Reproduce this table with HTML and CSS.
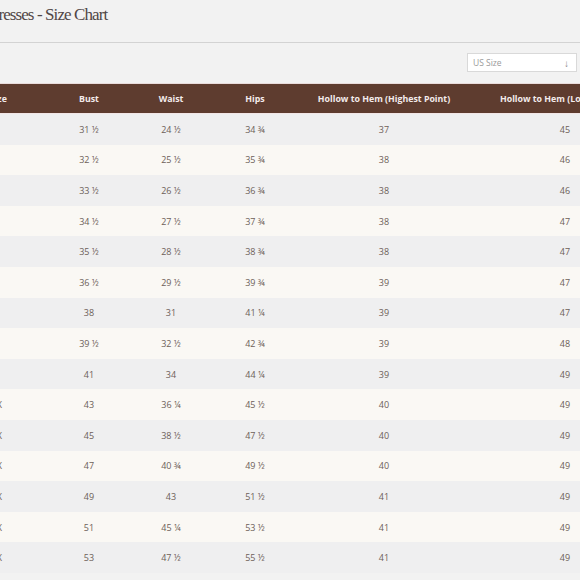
FILE: index.html
```html
<!DOCTYPE html>
<html>
<head>
<meta charset="utf-8">
<link rel="stylesheet" href="styles.css">
</head>
<body>
<div class="page">
  <header class="head">
    <h1 class="title">Dresses - Size Chart</h1>
  </header>
  <div class="toolbar">
    <div class="select"><span class="select-label">US Size</span><span class="select-arrow">↓</span></div>
  </div>
  <div class="table-wrap">
    <table class="chart">
      <colgroup>
        <col class="c-size"><col class="c-bust"><col class="c-waist"><col class="c-hips"><col class="c-high"><col class="c-low">
      </colgroup>
      <thead>
        <tr><th>Dress Size</th><th>Bust</th><th>Waist</th><th>Hips</th><th>Hollow to Hem (Highest Point)</th><th>Hollow to Hem (Lowest Point)</th></tr>
      </thead>
      <tbody>
        <tr><td>00</td><td>31 ½</td><td>24 ½</td><td>34 ¾</td><td>37</td><td>45</td></tr>
        <tr><td>0</td><td>32 ½</td><td>25 ½</td><td>35 ¾</td><td>38</td><td>46</td></tr>
        <tr><td>2</td><td>33 ½</td><td>26 ½</td><td>36 ¾</td><td>38</td><td>46</td></tr>
        <tr><td>4</td><td>34 ½</td><td>27 ½</td><td>37 ¾</td><td>38</td><td>47</td></tr>
        <tr><td>6</td><td>35 ½</td><td>28 ½</td><td>38 ¾</td><td>38</td><td>47</td></tr>
        <tr><td>8</td><td>36 ½</td><td>29 ½</td><td>39 ¾</td><td>39</td><td>47</td></tr>
        <tr><td>10</td><td>38</td><td>31</td><td>41 ¼</td><td>39</td><td>47</td></tr>
        <tr><td>12</td><td>39 ½</td><td>32 ½</td><td>42 ¾</td><td>39</td><td>48</td></tr>
        <tr><td>14</td><td>41</td><td>34</td><td>44 ¼</td><td>39</td><td>49</td></tr>
        <tr><td>14W / 1X</td><td>43</td><td>36 ¼</td><td>45 ½</td><td>40</td><td>49</td></tr>
        <tr><td>16W / 1X</td><td>45</td><td>38 ½</td><td>47 ½</td><td>40</td><td>49</td></tr>
        <tr><td>18W / 2X</td><td>47</td><td>40 ¾</td><td>49 ½</td><td>40</td><td>49</td></tr>
        <tr><td>20W / 2X</td><td>49</td><td>43</td><td>51 ½</td><td>41</td><td>49</td></tr>
        <tr><td>22W / 3X</td><td>51</td><td>45 ¼</td><td>53 ½</td><td>41</td><td>49</td></tr>
        <tr><td>24W / 3X</td><td>53</td><td>47 ½</td><td>55 ½</td><td>41</td><td>49</td></tr>
      </tbody>
    </table>
  </div>
</div>
</body>
</html>
```

FILE: styles.css
```css
html, body {
  margin: 0;
  padding: 0;
}
body {
  background: #f2f2f2;
  width: 580px;
  height: 580px;
  overflow: hidden;
}
.page {
  width: 580px;
}
.head {
  height: 42px;
  border-bottom: 1px solid #d3d3d3;
}
.title {
  margin: 0 0 0 -13px;
  padding-top: 4px;
  font-family: "Liberation Serif", serif;
  font-weight: normal;
  font-size: 17px;
  line-height: 22px;
  letter-spacing: -0.9px;
  color: #504646;
  white-space: nowrap;
}
.toolbar {
  display: flex;
  justify-content: flex-end;
  padding: 10px 3px 0 0;
  height: 30px;
}
.select {
  box-sizing: border-box;
  width: 110px;
  height: 19px;
  background: #ffffff;
  border: 1px solid #d9d9d9;
  display: flex;
  align-items: center;
  justify-content: space-between;
  padding: 0 7px 0 5px;
  font-family: "Open Sans", sans-serif;
  font-size: 8.5px;
  color: #9a9a9a;
}
.select-arrow {
  font-size: 10px;
  color: #8a8a8a;
}
.table-wrap {
  width: 580px;
  overflow: hidden;
  border-top: 1px solid #e9dcdc;
}
.chart {
  margin-left: -77px;
  width: 738px;
  table-layout: fixed;
  border-collapse: collapse;
  font-family: "Open Sans", sans-serif;
}
.c-size { width: 124px; }
.c-bust { width: 84px; }
.c-waist { width: 80px; }
.c-hips { width: 88px; }
.c-high { width: 170px; }
.c-low { width: 192px; }
.chart th {
  background: #5e3c2f;
  color: #f3ebeb;
  font-size: 8.8px;
  font-weight: 700;
  height: 29px;
  padding: 0;
  text-align: center;
  white-space: nowrap;
  border-bottom: 1px solid #f2e6e6;
}
.chart td {
  height: 30.6px;
  padding: 0;
  text-align: center;
  font-size: 9px;
  color: #6d6058;
  white-space: nowrap;
}
.chart td:first-child {
  padding-right: 3px;
}
.chart tbody tr:nth-child(odd) td {
  background: #efeff0;
}
.chart tbody tr:nth-child(even) td {
  background: #faf8f4;
}
```
